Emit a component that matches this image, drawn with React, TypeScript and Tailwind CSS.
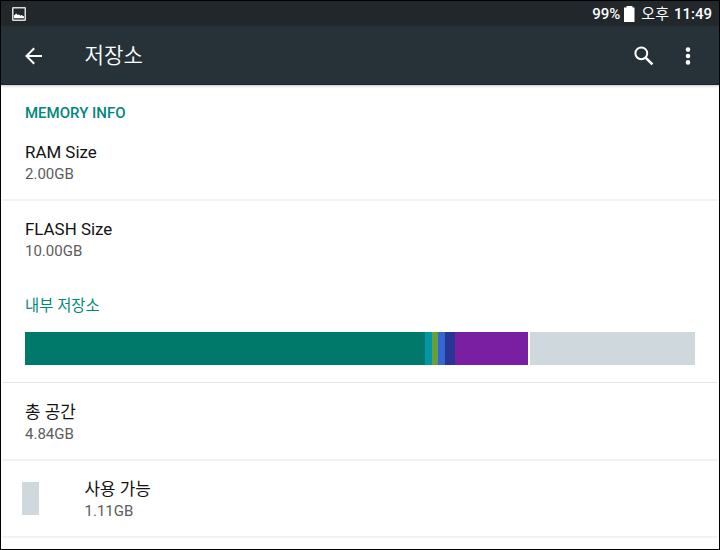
import type { ReactNode } from 'react';

const segments = [
  { color: 'bg-[#00796b]', width: 'w-[400px]' },
  { color: 'bg-[#0097a7]', width: 'w-[7px]' },
  { color: 'bg-[#689f38]', width: 'w-[6px]' },
  { color: 'bg-[#3367d6]', width: 'w-[7px]' },
  { color: 'bg-[#283593]', width: 'w-[10px]' },
  { color: 'bg-[#7b1fa2]', width: 'w-[73px]' },
];

function Item({ title, value, className = '' }: { title: ReactNode; value: string; className?: string }) {
  return (
    <div className={className}>
      <div className="h-6 text-[16.9px] leading-6 text-[#121212]">{title}</div>
      <div className="h-5 text-[15px] leading-5 text-[#5c5c5c]">{value}</div>
    </div>
  );
}

export default function App() {
  return (
    <div className="flex h-[550px] w-[720px] flex-col overflow-hidden border border-black bg-white font-[Roboto,'Noto_Sans_CJK_KR',sans-serif] whitespace-nowrap">
      <div className="flex h-[25px] shrink-0 items-center justify-between bg-[#21272b] pr-[7px] pl-[11px] text-white">
        <svg width="14" height="14" viewBox="0 0 14 14">
          <rect x="0.75" y="0.75" width="12.5" height="12.5" rx="0.5" fill="none" stroke="#dcdcdc" strokeWidth="1.5" />
          <path d="M2 11.2V8.6L4.2 6.4l1.6 1.5L7 7.4l1.4 1.4 1.2-.8L12 9.6v1.6z" fill="#fff" />
        </svg>
        <div className="flex items-center text-[15px] leading-6 font-medium">
          <span>99%</span>
          <svg className="mr-[6px] ml-1" width="11" height="16" viewBox="0 0 11 16">
            <path d="M2.5 0h6v1.5H10.5V16H0V1.5h2.5z" fill="#fff" />
          </svg>
          <span className="font-normal">오후</span>
          <span className="ml-[5px]">11:49</span>
        </div>
      </div>

      <div className="flex h-[59px] shrink-0 items-center border-b border-[#1b242c] bg-[#273238] text-white">
        <svg className="mt-px ml-[24px]" width="18" height="18" viewBox="0 0 18 18" fill="none" stroke="#fff" strokeWidth="2">
          <path d="M17 9H2M9.2 1.3L1.5 9l7.7 7.7" />
        </svg>
        <h1 className="mt-[2px] ml-[41.5px] text-[21.2px] leading-8 font-[350]">저장소</h1>
        <svg className="mt-[2px] ml-auto" width="20" height="20" viewBox="0 0 20 20" fill="none" stroke="#fff">
          <circle cx="7.3" cy="7.3" r="5.9" strokeWidth="2" />
          <path d="M11.8 11.8l6.6 6.6" strokeWidth="2.6" />
        </svg>
        <svg className="mt-[2px] mr-[28px] ml-[31px]" width="6" height="18" viewBox="0 0 6 18" fill="#fff">
          <circle cx="3" cy="2.6" r="2.3" />
          <circle cx="3" cy="9" r="2.3" />
          <circle cx="3" cy="15.4" r="2.3" />
        </svg>
      </div>
      <div className="h-[3px] shrink-0 bg-linear-to-b from-[#d6d2d6] to-white" />

      <div className="mx-px h-[113px] shrink-0 border-b-2 border-[#f2f2f2] px-[23px] pt-[15px]">
        <h2 className="h-5 text-[15px] leading-5 font-medium text-[#00877a]">MEMORY INFO</h2>
        <Item className="mt-[17px]" title="RAM Size" value="2.00GB" />
      </div>
      <Item className="h-[95px] shrink-0 px-6 pt-[16px]" title="FLASH Size" value="10.00GB" />
      <h2 className="h-[36px] shrink-0 px-6 text-[15.4px] leading-5 text-[#00877a]">내부 저장소</h2>
      <div className="mx-px flex h-[51px] shrink-0 border-b border-[#e6e6e6] px-[23px]">
        <div className="flex h-[33px] w-[670px]">
          {segments.map((s) => (
            <div key={s.color} className={`${s.color} ${s.width}`} />
          ))}
          <div className="ml-[2px] flex-1 bg-[#cfd8dc]" />
        </div>
      </div>
      <div className="mx-px h-[78px] shrink-0 border-b-2 border-[#f2f2f2] px-[23px] pt-[17px]">
        <Item title="총 공간" value="4.84GB" />
      </div>
      <div className="mx-px flex h-[77px] shrink-0 border-b-2 border-[#f2f2f2] pl-[20px]">
        <div className="mt-[21px] h-[33px] w-[17px] bg-[#cfd8dc]" />
        <Item className="ml-[45.5px] pt-[16px]" title="사용 가능" value="1.11GB" />
      </div>
    </div>
  );
}
